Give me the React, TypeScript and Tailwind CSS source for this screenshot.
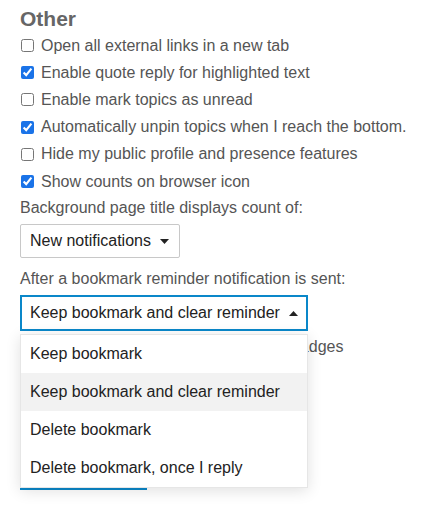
import React from 'react';

const OPTIONS = [
  { label: 'Open all external links in a new tab', checked: false },
  { label: 'Enable quote reply for highlighted text', checked: true },
  { label: 'Enable mark topics as unread', checked: false },
  { label: 'Automatically unpin topics when I reach the bottom.', checked: true },
  { label: 'Hide my public profile and presence features', checked: false },
  { label: 'Show counts on browser icon', checked: true },
];

const MENU = ['Keep bookmark', 'Keep bookmark and clear reminder', 'Delete bookmark', 'Delete bookmark, once I reply'];

const Caret = ({ up = false }: { up?: boolean }) => (
  <svg width="9" height="5" viewBox="0 0 9 5" className="shrink-0">
    {up ? <path d="M0 5 L4.5 0 L9 5 Z" fill="#222" /> : <path d="M0 0 L4.5 5 L9 0 Z" fill="#222" />}
  </svg>
);

const CheckRow = ({ label, checked }: { label: string; checked: boolean }) => (
  <label className="flex items-center gap-[7px] h-[27.2px] whitespace-nowrap">
    <input
      type="checkbox"
      defaultChecked={checked}
      className="w-[13px] h-[13px] m-0 ml-px shrink-0 accent-[#1a73e8]"
    />
    <span>{label}</span>
  </label>
);

export default function App() {
  return (
    <div className="w-[426px] h-[507px] bg-white overflow-hidden text-[16px] text-[#555] px-[20px] pt-[6px] whitespace-nowrap" style={{ fontFamily: '"Liberation Sans", Arial, sans-serif' }}>
      <h2 className="text-[21px] font-bold text-[#666] leading-[26px]">Other</h2>

      <div className="flex flex-col">
        {OPTIONS.map((o) => (
          <CheckRow key={o.label} label={o.label} checked={o.checked} />
        ))}
      </div>

      <div className="mt-[3px] leading-[20px]">Background page title displays count of:</div>
      <div className="mt-[6px] w-[160px] h-[34px] border border-[#c8c8c8] rounded-[2px] flex items-center gap-[9px] px-[9px] text-[#222]">
        <span>New notifications</span>
        <Caret />
      </div>

      <div className="mt-[11px] leading-[20px]">After a bookmark reminder notification is sent:</div>

      <div className="relative mt-[6px]">
        <div className="w-[288px] h-[36px] border-2 border-[#0a87c9] flex items-center gap-[9px] px-[8px] text-[#222]">
          <span>Keep bookmark and clear reminder</span>
          <Caret up />
        </div>

        {/* content under the open menu */}
        <div className="mt-[2px] flex flex-col">
          <CheckRow label="Skip new user onboarding tips and badges" checked={false} />
          <CheckRow label="Enable defaults" checked={false} />
          <div className="h-[69px]" />
          <div className="w-[127px] h-[33px] bg-white border-b-2 border-[#0a87c9]" />
        </div>

        <div className="absolute left-0 top-[39px] w-[288px] bg-white border border-[#e6e6e6] shadow-[0_3px_14px_rgba(0,0,0,0.12)] text-[#222]">
          {MENU.map((m, i) => (
            <div key={m} className={`h-[38px] flex items-center px-[9px] ${i === 1 ? 'bg-[#f2f2f2]' : ''}`}>
              {m}
            </div>
          ))}
        </div>
      </div>
    </div>
  );
}
